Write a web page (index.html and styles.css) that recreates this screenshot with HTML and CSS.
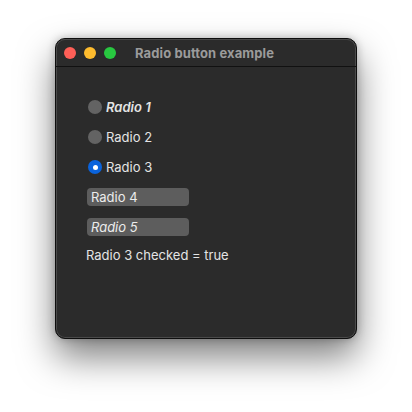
FILE: index.html
```html
<!DOCTYPE html>
<html>
<head>
<meta charset="utf-8">
<link rel="stylesheet" href="styles.css">
</head>
<body>
<div class="window">
  <div class="titlebar">
    <div class="lights">
      <span class="light red"></span>
      <span class="light yellow"></span>
      <span class="light green"></span>
    </div>
    <div class="title">Radio button example</div>
  </div>
  <div class="content">
    <div class="row"><span class="radio"></span><span class="label italic">Radio 1</span></div>
    <div class="row"><span class="radio"></span><span class="label">Radio 2</span></div>
    <div class="row"><span class="radio checked"></span><span class="label">Radio 3</span></div>
    <div class="row"><span class="box">Radio 4</span></div>
    <div class="row"><span class="box italic">Radio 5</span></div>
    <div class="row status">Radio 3 checked = true</div>
  </div>
</div>
</body>
</html>
```
FILE: styles.css
```css
html, body {
  margin: 0;
  padding: 0;
}
body {
  width: 412px;
  height: 412px;
  background: #ffffff;
  font-family: Inter, "Liberation Sans", sans-serif;
  box-sizing: border-box;
  padding: 38px 0 0 55px;
  overflow: hidden;
}
.window {
  width: 302px;
  height: 301px;
  box-sizing: border-box;
  background: #2b2b2b;
  border: 1px solid #0e0e0e;
  border-radius: 10px;
  box-shadow: inset 0 0 0 1px #4a4a4a, 0 18px 36px rgba(0,0,0,0.5), 0 0 8px rgba(0,0,0,0.25);
  overflow: hidden;
}
.titlebar {
  height: 27px;
  border-bottom: 1px solid #111;
  display: flex;
  align-items: center;
  position: relative;
  box-shadow: inset 0 1px 0 #4a4a4a;
}
.lights {
  display: flex;
  gap: 8px;
  padding-left: 8px;
  padding-top: 1px;
}
.light {
  width: 12px;
  height: 12px;
  border-radius: 50%;
  display: block;
}
.red { background: #fe5f57; }
.yellow { background: #febc2e; }
.green { background: #28c840; }
.title {
  margin-left: 19px;
  font-weight: 700;
  font-size: 13px;
  letter-spacing: 0.1px;
  color: #9b9b9b;
}
.content {
  padding: 25px 0 0 32px;
  display: flex;
  flex-direction: column;
  color: #e4e4e4;
  font-size: 13px;
}
.row {
  height: 30px;
  display: flex;
  align-items: center;
}
.radio {
  width: 14px;
  height: 14px;
  border-radius: 50%;
  background: #636363;
  box-sizing: border-box;
  display: block;
  position: relative;
  flex: none;
}
.radio.checked {
  background: #0a63dc;
}
.radio.checked::after {
  content: "";
  position: absolute;
  left: 4.5px;
  top: 4.5px;
  width: 5px;
  height: 5px;
  border-radius: 50%;
  background: #fff;
}
.label {
  margin-left: 4px;
}
.italic {
  font-style: italic;
}
.label.italic {
  font-weight: 600;
}
.box {
  margin-left: -1px;
  width: 102px;
  height: 18px;
  box-sizing: border-box;
  background: #5d5d5d;
  border-radius: 4px;
  padding-left: 4px;
  line-height: 18px;
  color: #ececec;
}
.status {
  margin-left: -2px;
  height: 26px;
}
```
